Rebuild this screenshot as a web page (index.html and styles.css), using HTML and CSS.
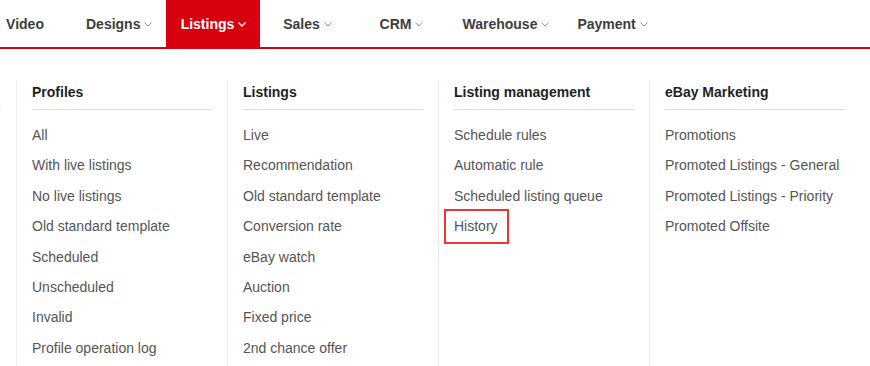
FILE: index.html
```html
<!DOCTYPE html>
<html lang="en">
<head>
<meta charset="utf-8">
<title>Listings menu</title>
<link rel="stylesheet" href="styles.css">
</head>
<body>
<div class="page">
  <nav class="topnav">
    <ul class="nav-list">
      <li class="nav-item"><span class="nav-label">Video</span></li>
      <li class="nav-item"><span class="nav-label">Designs</span><svg class="chev" width="8" height="5" viewBox="0 0 8 5"><polyline points="0.5,0.5 4,4 7.5,0.5" fill="none" stroke="currentColor" stroke-width="1"/></svg></li>
      <li class="nav-item active"><span class="nav-label">Listings</span><svg class="chev" width="8" height="5" viewBox="0 0 8 5"><polyline points="0.5,0.5 4,4 7.5,0.5" fill="none" stroke="currentColor" stroke-width="1.3"/></svg></li>
      <li class="nav-item"><span class="nav-label">Sales</span><svg class="chev" width="8" height="5" viewBox="0 0 8 5"><polyline points="0.5,0.5 4,4 7.5,0.5" fill="none" stroke="currentColor" stroke-width="1"/></svg></li>
      <li class="nav-item"><span class="nav-label">CRM</span><svg class="chev" width="8" height="5" viewBox="0 0 8 5"><polyline points="0.5,0.5 4,4 7.5,0.5" fill="none" stroke="currentColor" stroke-width="1"/></svg></li>
      <li class="nav-item"><span class="nav-label">Warehouse</span><svg class="chev" width="8" height="5" viewBox="0 0 8 5"><polyline points="0.5,0.5 4,4 7.5,0.5" fill="none" stroke="currentColor" stroke-width="1"/></svg></li>
      <li class="nav-item"><span class="nav-label">Payment</span><svg class="chev" width="8" height="5" viewBox="0 0 8 5"><polyline points="0.5,0.5 4,4 7.5,0.5" fill="none" stroke="currentColor" stroke-width="1"/></svg></li>
    </ul>
  </nav>

  <div class="dropdown">
    <div class="col">
      <h3 class="col-title">&nbsp;</h3>
    </div>
    <div class="col">
      <h3 class="col-title">Profiles</h3>
      <ul class="col-list">
        <li>All</li>
        <li>With live listings</li>
        <li>No live listings</li>
        <li>Old standard template</li>
        <li>Scheduled</li>
        <li>Unscheduled</li>
        <li>Invalid</li>
        <li>Profile operation log</li>
      </ul>
    </div>
    <div class="col">
      <h3 class="col-title">Listings</h3>
      <ul class="col-list">
        <li>Live</li>
        <li>Recommendation</li>
        <li>Old standard template</li>
        <li>Conversion rate</li>
        <li>eBay watch</li>
        <li>Auction</li>
        <li>Fixed price</li>
        <li>2nd chance offer</li>
      </ul>
    </div>
    <div class="col">
      <h3 class="col-title">Listing management</h3>
      <ul class="col-list">
        <li>Schedule rules</li>
        <li>Automatic rule</li>
        <li>Scheduled listing queue</li>
        <li><span class="marked">History</span></li>
      </ul>
    </div>
    <div class="col">
      <h3 class="col-title">eBay Marketing</h3>
      <ul class="col-list">
        <li>Promotions</li>
        <li>Promoted Listings - General</li>
        <li>Promoted Listings - Priority</li>
        <li>Promoted Offsite</li>
      </ul>
    </div>
  </div>
</div>
</body>
</html>
```

FILE: styles.css
```css
html, body {
  margin: 0;
  padding: 0;
  background: #ffffff;
}

body {
  font-family: "Liberation Sans", Arial, sans-serif;
  overflow: hidden;
}

.page {
  width: 870px;
  height: 366px;
  overflow: hidden;
}

.topnav {
  border-bottom: 2px solid #d7000f;
}

.nav-list {
  display: flex;
  list-style: none;
  margin: 0 0 0 -22px;
  padding: 0;
  height: 47px;
}

.nav-item {
  display: flex;
  align-items: center;
  justify-content: center;
  gap: 4px;
  min-width: 94px;
  box-sizing: border-box;
  padding: 0 14px;
  height: 47px;
  font-size: 14px;
  font-weight: bold;
  color: #3d3d3d;
  white-space: nowrap;
}

.nav-item .chev {
  color: #9a9a9a;
  margin-top: 1px;
}

.nav-item.active {
  background: #d7000f;
  color: #ffffff;
}

.nav-item.active .chev {
  color: #ffffff;
}

.dropdown {
  display: flex;
  margin-left: -195px;
  padding-top: 31px;
  height: 330px;
  box-sizing: border-box;
}

.col {
  flex: 0 0 auto;
  width: 211px;
  box-sizing: border-box;
  border-left: 1px solid #ececec;
  padding: 0 15px 0 15px;
}

.col-title {
  margin: 0;
  font-size: 14px;
  font-weight: bold;
  line-height: 24px;
  color: #1f1f1f;
  padding-bottom: 5px;
  border-bottom: 1px solid #dedede;
  white-space: nowrap;
}

.col-list {
  list-style: none;
  margin: 10px 0 0 0;
  padding: 0;
}

.col-list li {
  font-size: 14px;
  line-height: 30.4px;
  color: #555555;
  white-space: nowrap;
}

.marked {
  position: relative;
  display: inline-block;
}

.marked::after {
  content: "";
  position: absolute;
  top: -2px;
  bottom: -2px;
  left: -10px;
  right: -11px;
  border: 2px solid #ee3535;
}
```
